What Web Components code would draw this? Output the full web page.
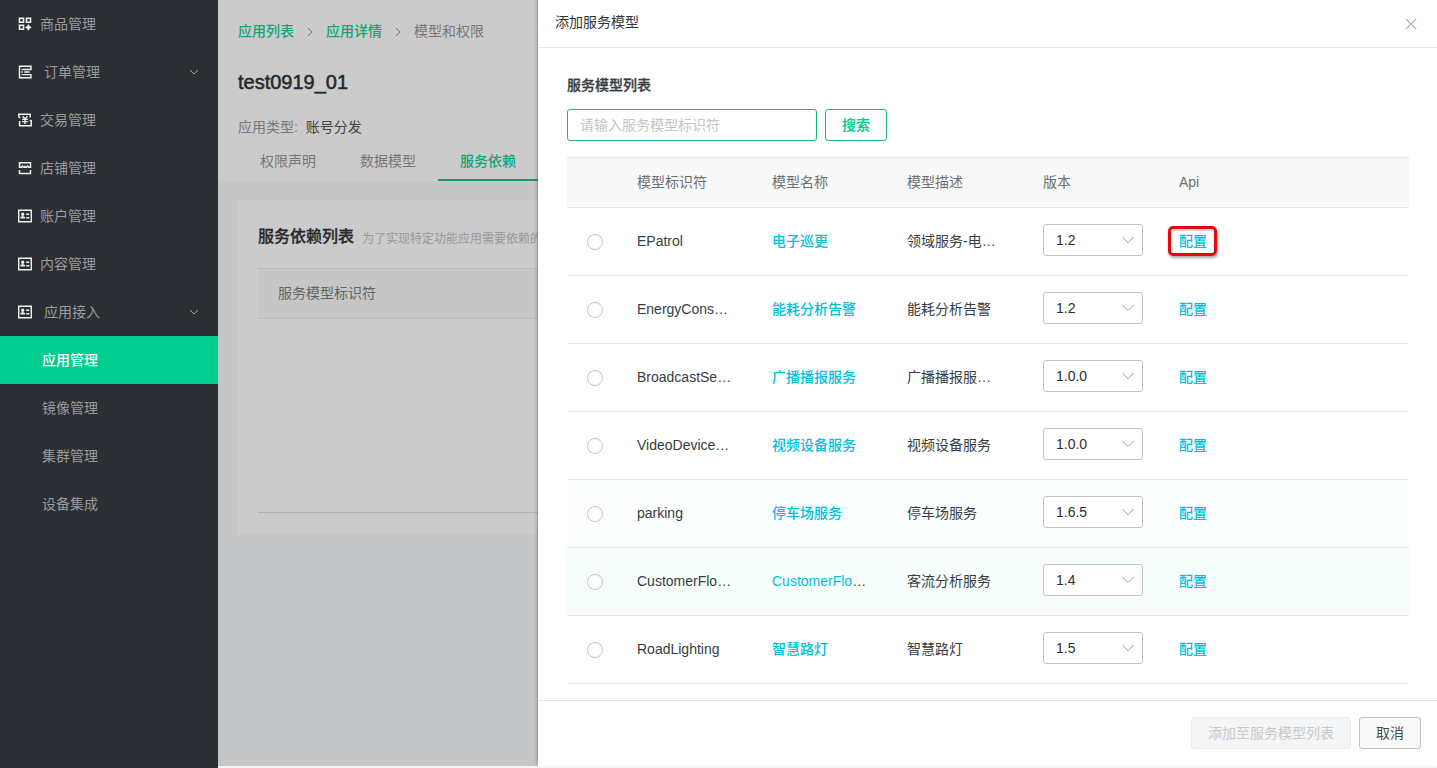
<!DOCTYPE html>
<html lang="zh-CN">
<head>
<meta charset="utf-8">
<title>应用管理</title>
<style>
html, body{
    height: 100%;
    margin: 0;
}
body{
    overflow: hidden;
    font: 14px/22px "Liberation Sans", "Noto Sans CJK SC", sans-serif;
    color: #373d41;
}
</style>
</head>
<body>
<console-app></console-app>

<script>
const icons = {
  goods: `<g fill="none" stroke="currentColor" stroke-width="1.6"><path d="M1.5 1.3h4v4h-4zM8.5 1.3h4v4h-4zM1.5 8.3h4v4h-4z"/></g><path d="M10.4 7.6l1 1.7 1.8 1.1-1.8 1-1 1.9-1.1-1.9-1.8-1 1.8-1.1z" fill="currentColor" stroke="currentColor" stroke-width=".8"/>`,
  order: `<path d="M13 9.6v3.1H1.5V1.3H13v3.2H4.6M4.6 9.6h8.9M6.2 7h5.4M3.4 4.5h.8M3.4 7h1.4M3.4 9.6h.8" fill="none" stroke="currentColor" stroke-width="1.4"/>`,
  trade: `<path d="M.8 4.6V1.2h11.4v3.4M.8 4.4h1.6M1.6 8v4.8h11.6V7M13.2 7.4h-1.6" fill="none" stroke="currentColor" stroke-width="1.5"/><path d="M4.6 3.3L7 6l2.4-2.7M4.2 6.4h5.6M4.2 8.6h5.6M7 6v5" fill="none" stroke="currentColor" stroke-width="1.4"/>`,
  shop: `<path d="M1.5 7V1.7h11V7M1.5 6.3h1.7l1.2-1.2 1.3 1.2h.6l.7-.8.7.8h.6l1.3-1.2 1.2 1.2h1.7M1.5 9v3.4h11V9" fill="none" stroke="currentColor" stroke-width="1.5"/>`,
  card: `<path d="M.7 1.2h12.6v11.6H.7z" fill="none" stroke="currentColor" stroke-width="1.4"/><circle cx="4.7" cy="5.2" r="1.6" fill="currentColor"/><path d="M4 6h1.4v1.2l1.6.7v1.7H2.4V7.9L4 7.2zM8.2 4.5h3v1.4h-3zM8.2 8h3v1.4h-3z" fill="currentColor"/>`
};

// ---------- sidebar entry ----------
class NavItem extends HTMLElement{
  constructor(){
    super();
    this.attachShadow({mode: "open"});
  }

  connectedCallback(){
    this.render();
  }

  render(){
    const icon = this.getAttribute("icon");
    const open = this.hasAttribute("group");
    this.shadowRoot.innerHTML = `
<style>
:host{
    display: flex;
    align-items: center;
    box-sizing: border-box;
    height: 48px;
    padding: 0 18px 0 42px;
    color: #9a9c9e;
}
:host([icon]){
    padding-left: 18px;
}
:host([active]){
    background: #00cd8e;
    color: #fff;
    font-weight: 500;
}
.icon{
    width: 14px;
    height: 14px;
    margin-right: 8px;
    color: #f1f2f2;
}
:host([group]) .icon{
    margin-right: 12px;
}
.label{
    flex: 1;
}
.arrow{
    width: 12px;
    height: 12px;
}
</style>
${icon ? `<svg class="icon" viewBox="0 0 14 14">${icons[icon]}</svg>` : ""}
<span class="label"><slot></slot></span>
${open ? `<svg class="arrow" viewBox="0 0 12 12"><path d="M2 4l4 4 4-4" fill="none" stroke="#9a9c9e" stroke-width="1"/></svg>` : ""}`;
  }
}
customElements.define("nav-item", NavItem);

class SideBar extends HTMLElement{
  constructor(){
    super();
    this.attachShadow({mode: "open"});
    this.shadowRoot.innerHTML = `
<style>
:host{
    display: block;
    flex: none;
    width: 218px;
    background: #2b2e33;
}
</style>
<slot></slot>`;
  }
}
customElements.define("side-bar", SideBar);

// ---------- page behind the drawer ----------
class AppDetail extends HTMLElement{
  constructor(){
    super();
    this.attachShadow({mode: "open"});
    this.shadowRoot.innerHTML = `
<style>
:host{
    display: block;
    flex: 1;
    min-width: 0;
    margin-bottom: 2px;
    background: #c5c6c8;
    white-space: nowrap;
}
header{
    box-sizing: border-box;
    height: 181px;
    padding: 20px 20px 0;
    background: #cbcbcb;
    display: flex;
    flex-direction: column;
}
nav{
    display: flex;
    align-items: center;
    color: #777;
}
nav a{
    color: #0fa577;
    font-weight: 500;
}
nav svg{
    width: 8px;
    height: 10px;
    margin: 2px 12px 0;
}
h1{
    margin: 25px 0 0;
    font-size: 20px;
    line-height: 30px;
    font-weight: 500;
    color: #25282b;
    -webkit-text-stroke: .5px #25282b;
}
.type{
    margin-top: 19px;
    color: #777;
}
.type b{
    font-weight: 400;
    color: #3f4346;
    margin-left: 4px;
}
.tabs{
    display: flex;
    margin-top: auto;
}
.tabs span{
    width: 100px;
    height: 41px;
    line-height: 42px;
    box-sizing: border-box;
    text-align: center;
    color: #777;
}
.tabs .on{
    color: #0fa577;
    font-weight: 500;
    border-bottom: 2px solid #21936f;
}
section{
    box-sizing: border-box;
    height: 333px;
    margin: 19px 20px;
    padding: 25px 20px 20px;
    background: #cbcbcb;
}
.title{
    display: flex;
    align-items: baseline;
    line-height: 24px;
    font-size: 12px;
    color: #999;
}
.title span{
    position: relative;
    top: 1px;
}
h2{
    margin: 0 8px 0 0;
    font-size: 16px;
    color: #25292c;
    font-weight: 500;
    -webkit-text-stroke: .3px #25292c;
}
.table{
    height: 243px;
    margin-top: 18px;
    border-top: 1px solid #bababb;
    border-bottom: 1px solid #b2b3b4;
}
.head{
    height: 49px;
    line-height: 48px;
    padding-left: 20px;
    background: #c6c6c6;
    border-bottom: 1px solid #bababb;
    color: #606466;
}
</style>
<header>
  <nav>
    <a>应用列表</a>
    <svg viewBox="0 0 8 10"><path d="M2 1l4 4-4 4" fill="none" stroke="#777"/></svg>
    <a>应用详情</a>
    <svg viewBox="0 0 8 10"><path d="M2 1l4 4-4 4" fill="none" stroke="#777"/></svg>
    <span>模型和权限</span>
  </nav>
  <h1>test0919_01</h1>
  <div class="type">应用类型: <b>账号分发</b></div>
  <div class="tabs"><span>权限声明</span><span>数据模型</span><span class="on">服务依赖</span></div>
</header>
<section>
  <div class="title"><h2>服务依赖列表</h2><span>为了实现特定功能应用需要依赖的</span></div>
  <div class="table"><div class="head">服务模型标识符</div></div>
</section>`;
  }
}
customElements.define("app-detail", AppDetail);

// ---------- controls ----------
class UiButton extends HTMLElement{
  constructor(){
    super();
    this.attachShadow({mode: "open"});
    this.shadowRoot.innerHTML = `
<style>
:host{
    display: inline-block;
    box-sizing: border-box;
    height: 32px;
    line-height: 30px;
    padding: 0 16px;
    border: 1px solid #c1c1c1;
    border-radius: 3px;
    background: #f9f9f9;
    color: #494c4f;
}
:host([kind="primary"]){
    border-color: #1db587;
    background: #fff;
    color: #00cd8e;
    font-weight: 500;
    -webkit-text-stroke: .2px #00cd8e;
}
:host([disabled]){
    border-color: #ebecec;
    background: #f4f5f6;
    color: #c8c9ca;
}
</style>
<slot></slot>`;
  }
}
customElements.define("ui-button", UiButton);

class UiSelect extends HTMLElement{
  constructor(){
    super();
    this.attachShadow({mode: "open"});
    this.shadowRoot.innerHTML = `
<style>
:host{
    display: flex;
    align-items: center;
    justify-content: space-between;
    box-sizing: border-box;
    width: 100px;
    height: 32px;
    padding: 0 8px 0 12px;
    border: 1px solid #c1c4c6;
    border-radius: 3px;
    background: #fff;
    line-height: 30px;
    color: #2b2f32;
}
svg{
    width: 12px;
    height: 8px;
}
</style>
<slot></slot>
<svg viewBox="0 0 12 8"><path d="M.4 1L6 6.6 11.6 1" fill="none" stroke="#999" stroke-width="1"/></svg>`;
  }
}
customElements.define("ui-select", UiSelect);

// ---------- one service model ----------
class ModelRow extends HTMLElement{
  constructor(){
    super();
    this.attachShadow({mode: "open"});
  }

  connectedCallback(){
    this.render();
  }

  render(){
    const name = this.getAttribute("name");
    // the ellipsis keeps the text colour of the cell, only the name is a link
    const cut = name.endsWith("…");
    this.shadowRoot.innerHTML = `
<style>
:host{
    display: grid;
    grid-template-columns: 70px 135px 135px 136px 136px 1fr;
    align-items: center;
    height: 67px;
    border-bottom: 1px solid #e8e9ea;
    white-space: nowrap;
}
:host([tint="soft"]){
    background: #fcfefe;
}
:host([tint="hover"]){
    background: #f6fdfb;
}
span{
    margin-top: -2px;
}
i{
    box-sizing: border-box;
    width: 16px;
    height: 16px;
    margin: 1px 0 0 20px;
    border: 1px solid #c1c4c6;
    border-radius: 50%;
    background: #fff;
}
ui-select{
    margin-top: -3px;
}
a{
    color: #00c1de;
    font-weight: 500;
}
.api{
    position: relative;
    justify-self: start;
}
.api.mark::after{
    content: "";
    position: absolute;
    box-sizing: border-box;
    left: -11px;
    top: -4px;
    width: 49px;
    height: 30px;
    border: 3px solid #e5090e;
    border-radius: 5px;
    box-shadow: 1px 2px 3px rgba(0,0,0,.35), inset 1px 2px 2px rgba(0,0,0,.2);
}
</style>
<i></i>
<span>${this.getAttribute("code")}</span>
<span><a>${cut ? name.slice(0, -1) : name}</a>${cut ? "…" : ""}</span>
<span>${this.getAttribute("desc")}</span>
<ui-select>${this.getAttribute("version")}</ui-select>
<span class="api ${this.hasAttribute("mark") ? "mark" : ""}"><a>配置</a></span>`;
  }
}
customElements.define("model-row", ModelRow);

class ModelTable extends HTMLElement{
  constructor(){
    super();
    this.attachShadow({mode: "open"});
    this.shadowRoot.innerHTML = `
<style>
:host{
    display: block;
}
.head{
    display: grid;
    grid-template-columns: 70px 135px 135px 136px 136px 1fr;
    align-items: center;
    box-sizing: border-box;
    height: 51px;
    padding-bottom: 2px;
    border-top: 1px solid #e8e9ea;
    border-bottom: 1px solid #e8e9ea;
    background: #f8f8f8;
    color: #6c7073;
}
</style>
<div class="head"><span></span><span>模型标识符</span><span>模型名称</span><span>模型描述</span><span>版本</span><span>Api</span></div>
<slot></slot>`;
  }
}
customElements.define("model-table", ModelTable);

class SideDrawer extends HTMLElement{
  constructor(){
    super();
    this.attachShadow({mode: "open"});
    this.shadowRoot.innerHTML = `
<style>
:host{
    position: absolute;
    top: 0;
    right: 0;
    bottom: 2px;
    width: 899px;
    display: flex;
    flex-direction: column;
    background: #fff;
    box-shadow: -1px -2px 3px rgba(0,0,0,.3);
}
header{
    display: flex;
    justify-content: space-between;
    box-sizing: border-box;
    height: 48px;
    padding: 11px 20px 0 17px;
    border-bottom: 1px solid #e8e9ea;
    color: #333;
}
header svg{
    width: 12px;
    height: 12px;
    margin-top: 7px;
}
main{
    flex: 1;
    padding: 26px 28px 0 29px;
}
footer{
    display: flex;
    justify-content: flex-end;
    gap: 8px;
    box-sizing: border-box;
    height: 66px;
    padding: 16px 16px 0;
    border-top: 1px solid #e4e5e6;
}
</style>
<header>
  <slot name="title"></slot>
  <svg viewBox="0 0 12 12"><path d="M.8.8l10.4 10.4M11.2.8L.8 11.2" stroke="#a5a5a5" stroke-width="1.1"/></svg>
</header>
<main><slot></slot></main>
<footer><slot name="footer"></slot></footer>`;
  }
}
customElements.define("side-drawer", SideDrawer);

const models = [
  ["EPatrol", "电子巡更", "领域服务-电…", "1.2", "mark"],
  ["EnergyCons…", "能耗分析告警", "能耗分析告警", "1.2", ""],
  ["BroadcastSe…", "广播播报服务", "广播播报服…", "1.0.0", ""],
  ["VideoDevice…", "视频设备服务", "视频设备服务", "1.0.0", ""],
  ["parking", "停车场服务", "停车场服务", "1.6.5", 'tint="soft"'],
  ["CustomerFlo…", "CustomerFlo…", "客流分析服务", "1.4", 'tint="hover"'],
  ["RoadLighting", "智慧路灯", "智慧路灯", "1.5", ""]
];

class ConsoleApp extends HTMLElement{
  constructor(){
    super();
    this.attachShadow({mode: "open"});
  }

  connectedCallback(){
    this.render();
  }

  render(){
    const rows = models.map(([code, name, desc, version, extra]) =>
      `<model-row code="${code}" name="${name}" desc="${desc}" version="${version}" ${extra}></model-row>`).join("");

    this.shadowRoot.innerHTML = `
<style>
:host{
    position: relative;
    display: flex;
    height: 100vh;
    overflow: hidden;
    background: #f7f7f7;
}
h3{
    margin: 0;
    font-size: 14px;
    font-weight: 500;
    color: #373d41;
    -webkit-text-stroke: .3px #373d41;
}
.search{
    display: flex;
    gap: 8px;
    margin: 13px 0 16px;
}
.field{
    box-sizing: border-box;
    width: 250px;
    height: 32px;
    padding: 0 12px;
    border: 1px solid #1db587;
    border-radius: 3px;
    line-height: 30px;
    color: #c3c5c6;
}
</style>
<side-bar>
  <nav-item icon="goods">商品管理</nav-item>
  <nav-item icon="order" group>订单管理</nav-item>
  <nav-item icon="trade">交易管理</nav-item>
  <nav-item icon="shop">店铺管理</nav-item>
  <nav-item icon="card">账户管理</nav-item>
  <nav-item icon="card">内容管理</nav-item>
  <nav-item icon="card" group>应用接入</nav-item>
  <nav-item active>应用管理</nav-item>
  <nav-item>镜像管理</nav-item>
  <nav-item>集群管理</nav-item>
  <nav-item>设备集成</nav-item>
</side-bar>
<app-detail></app-detail>
<side-drawer>
  <span slot="title">添加服务模型</span>
  <h3>服务模型列表</h3>
  <div class="search"><div class="field">请输入服务模型标识符</div><ui-button kind="primary">搜索</ui-button></div>
  <model-table>${rows}</model-table>
  <ui-button slot="footer" disabled>添加至服务模型列表</ui-button>
  <ui-button slot="footer">取消</ui-button>
</side-drawer>`;
  }
}
customElements.define("console-app", ConsoleApp);
</script>
</body>
</html>
